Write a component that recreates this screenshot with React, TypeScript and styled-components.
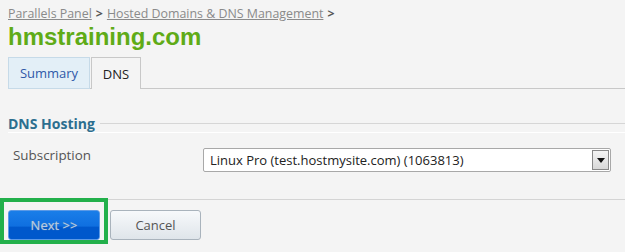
import React from 'react';
import styled, { createGlobalStyle } from 'styled-components';

const GlobalStyle = createGlobalStyle`
  html, body {
    margin: 0;
    padding: 0;
    background: #f4f4f4;
  }
  body {
    font-family: "Open Sans", "Liberation Sans", Arial, sans-serif;
  }
`;

const Page = styled.div`
  position: relative;
  width: 625px;
  height: 252px;
  overflow: hidden;
  background: #f4f4f4;
`;

const Top = styled.div`
  padding: 6px 8px 0 8px;
`;

const Crumbs = styled.div`
  font-size: 12.4px;
  line-height: 16px;
  color: #444;
`;

const CrumbLink = styled.a`
  color: #8a8a8a;
  text-decoration: underline;
`;

const CrumbSep = styled.span`
  font-weight: bold;
  color: #555;
  margin: 0 4px;
`;

const Title = styled.h1`
  margin: 1px 0 0 0;
  font-family: "Liberation Sans", Arial, sans-serif;
  font-size: 24px;
  line-height: 28px;
  font-weight: bold;
  color: #5fab17;
`;

const Tabs = styled.div`
  display: flex;
  margin-top: 6px;
  margin-left: 8px;
  border-bottom: 1px solid #c8c8c8;
  height: 31px;
`;

const Tab = styled.div<{ $active?: boolean }>`
  display: flex;
  align-items: center;
  justify-content: center;
  box-sizing: border-box;
  height: 32px;
  margin-right: 1px;
  font-size: 13px;
  color: ${(p) => (p.$active ? '#222' : '#2f58a8')};
  background: ${(p) => (p.$active ? '#f4f4f4' : '#e3eff7')};
  border: 1px solid ${(p) => (p.$active ? '#c8c8c8' : '#c6dae8')};
  border-bottom: ${(p) => (p.$active ? 'none' : '1px solid #c6dae8')};
  width: ${(p) => (p.$active ? '50px' : '82px')};
`;

const Section = styled.div`
  margin: 27px 0 0 8px;
`;

const SectionHead = styled.div`
  display: flex;
  align-items: center;
  border-bottom: 1px solid #ffffff;
  height: 15px;
  padding-bottom: 1px;
`;

const SectionTitle = styled.h2`
  margin: 0;
  font-size: 14px;
  font-weight: bold;
  color: #2c6e8f;
  line-height: 15px;
  padding-right: 5px;
`;

const Rule = styled.div`
  flex: 1;
  height: 1px;
  background: #d6d6d6;
`;

const FieldRow = styled.div`
  display: flex;
  align-items: flex-start;
  margin-top: 15px;
  padding-left: 5px;
`;

const Label = styled.label`
  width: 190px;
  font-size: 13.4px;
  color: #555;
  line-height: 14px;
`;

const Select = styled.div`
  display: flex;
  align-items: center;
  box-sizing: border-box;
  width: 408px;
  height: 24px;
  background: #fff;
  border: 1px solid #a8a8a8;
  border-radius: 2px;
  padding: 1px 1px 1px 6px;
`;

const SelectText = styled.span`
  flex: 1;
  font-size: 13px;
  color: #222;
  white-space: nowrap;
`;

const SelectButton = styled.div`
  display: flex;
  align-items: center;
  justify-content: center;
  box-sizing: border-box;
  width: 17px;
  height: 20px;
  border: 1px solid #888;
  background: linear-gradient(#f4f4f4, #d8d8d8);
`;

const Footer = styled.div`
  margin-top: 27px;
  border-top: 1px solid #d4d4d4;
  display: flex;
  gap: 10px;
  padding: 10px 0 0 8px;
`;

const Button = styled.button<{ $primary?: boolean }>`
  box-sizing: border-box;
  width: ${(p) => (p.$primary ? '92px' : '91px')};
  height: 30px;
  font-family: "Open Sans", "Liberation Sans", Arial, sans-serif;
  font-size: 13px;
  border-radius: 3px;
  cursor: pointer;
  ${(p) =>
    p.$primary
      ? `
    color: #b9c9e4;
    background: linear-gradient(#1a7ee8 0%, #0f6fe0 55%, #0058cc 56%, #0058cc 100%);
    border: 1px solid #5c9ae6;
    text-shadow: 0 0 1px #8aa;
  `
      : `
    color: #555;
    background: linear-gradient(#f7f9fb, #dfe5ea);
    border: 1px solid #a9b3bc;
  `}
`;

const Highlight = styled.div`
  position: absolute;
  left: 0;
  top: 198px;
  width: 108px;
  height: 46px;
  box-sizing: border-box;
  border: 4px solid #22b04b;
  pointer-events: none;
`;

export default function App() {
  return (
    <Page>
      <GlobalStyle />
      <Top>
        <Crumbs>
          <CrumbLink href="#">Parallels Panel</CrumbLink>
          <CrumbSep>&gt;</CrumbSep>
          <CrumbLink href="#">Hosted Domains &amp; DNS Management</CrumbLink>
          <CrumbSep>&gt;</CrumbSep>
        </Crumbs>
        <Title>hmstraining.com</Title>
      </Top>
      <Tabs>
        <Tab>Summary</Tab>
        <Tab $active>DNS</Tab>
      </Tabs>
      <Section>
        <SectionHead>
          <SectionTitle>DNS Hosting</SectionTitle>
          <Rule />
        </SectionHead>
        <FieldRow>
          <Label>Subscription</Label>
          <Select>
            <SelectText>Linux Pro (test.hostmysite.com) (1063813)</SelectText>
            <SelectButton>
              <svg width="8" height="5" viewBox="0 0 8 5">
                <path d="M0 0 H8 L4 5 Z" fill="#111" />
              </svg>
            </SelectButton>
          </Select>
        </FieldRow>
      </Section>
      <Footer>
        <Button $primary>Next &gt;&gt;</Button>
        <Button>Cancel</Button>
      </Footer>
      <Highlight />
    </Page>
  );
}
